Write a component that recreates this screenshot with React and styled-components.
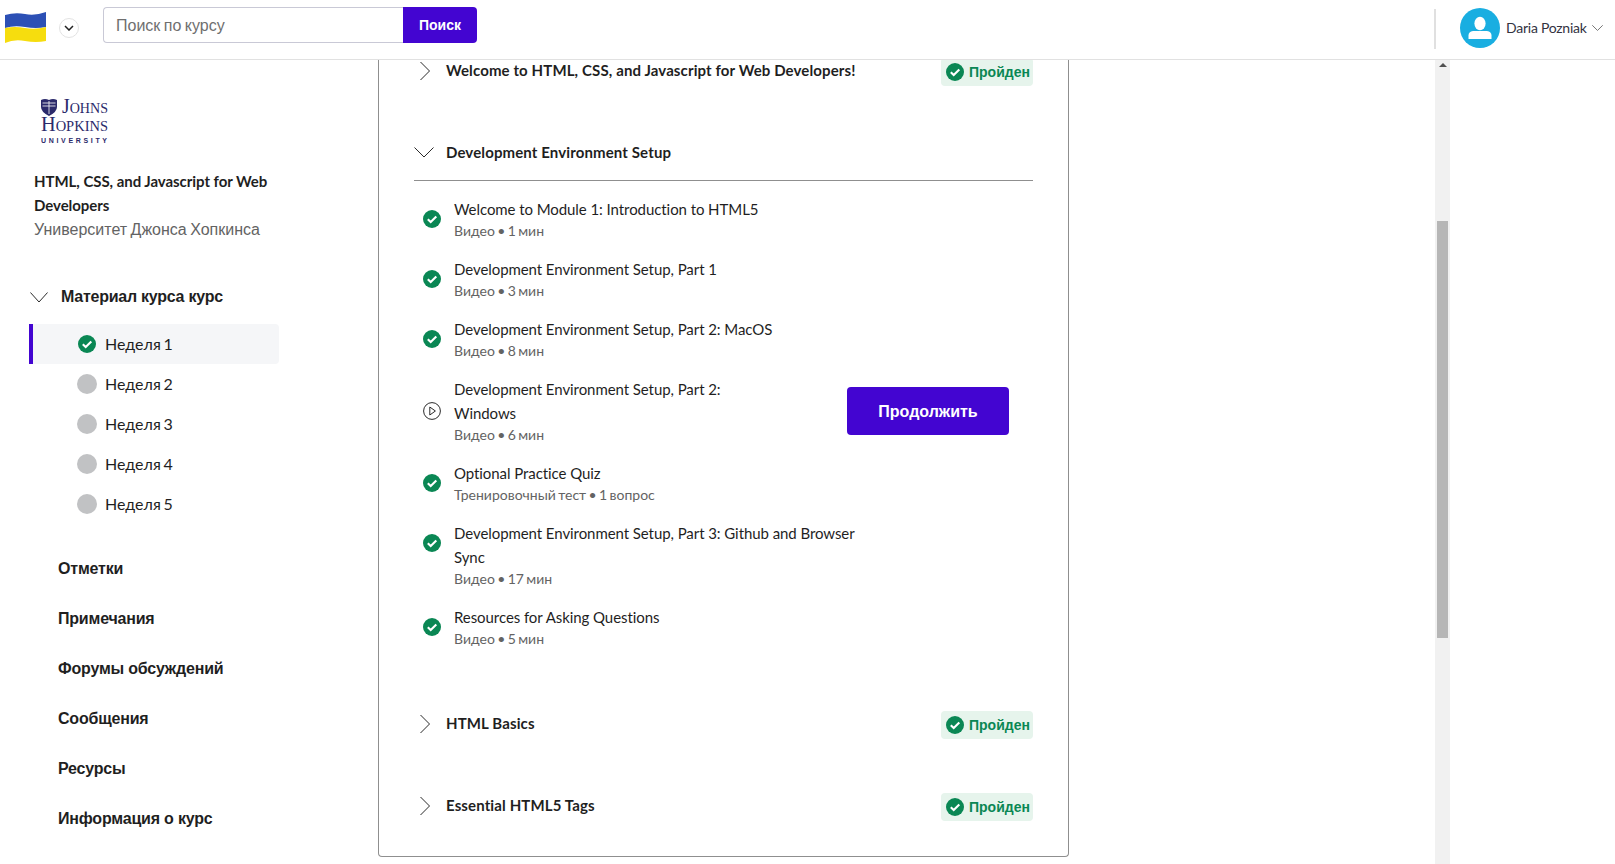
import React from 'react';
import styled, {createGlobalStyle} from 'styled-components';

const latin = `Lato, "Liberation Sans", sans-serif`;
const purple = '#4305d1';
const green = '#0a8754';

const lessons = [
   {title: 'Welcome to Module 1: Introduction to HTML5', meta: 'Видео • 1 мин', done: true},
   {title: 'Development Environment Setup, Part 1', meta: 'Видео • 3 мин', done: true},
   {title: 'Development Environment Setup, Part 2: MacOS', meta: 'Видео • 8 мин', done: true},
   {title: 'Development Environment Setup, Part 2: Windows', meta: 'Видео • 6 мин', done: false},
   {title: 'Optional Practice Quiz', meta: 'Тренировочный тест • 1 вопрос', done: true},
   {title: 'Development Environment Setup, Part 3: Github and Browser Sync', meta: 'Видео • 17 мин', done: true, iconTop: true},
   {title: 'Resources for Asking Questions', meta: 'Видео • 5 мин', done: true},
];

const weeks = ['Неделя 1', 'Неделя 2', 'Неделя 3', 'Неделя 4', 'Неделя 5'];
const links = ['Отметки', 'Примечания', 'Форумы обсуждений', 'Сообщения', 'Ресурсы', 'Информация о курс'];

const CheckIcon = ({size = 18}) => (
   <svg width={size} height={size} viewBox="0 0 18 18" style={{flex: 'none'}}>
      <circle cx="9" cy="9" r="9" fill={green} />
      <path d="M4.8 9.3l2.9 2.8 5.6-5.6" fill="none" stroke="#fff" strokeWidth="2.1" />
   </svg>
);

const PlayIcon = () => (
   <svg width="18" height="18" viewBox="0 0 18 18" style={{flex: 'none'}}>
      <circle cx="9" cy="9" r="8.4" fill="none" stroke="#2a2a2a" strokeWidth="1" />
      <path d="M6.8 5l5.6 4-5.6 4z" fill="none" stroke="#2a2a2a" strokeWidth="1" />
   </svg>
);

const ChevronRight = () => (
   <svg width="20" height="20" viewBox="0 0 20 20">
      <path d="M6.500 1l9 9-9 9" fill="none" stroke="#2a2a2a" strokeWidth="1" />
   </svg>
);

const ChevronDown = ({width = 20, height = 11, color = '#2a2a2a'}) => (
   <svg width={width} height={height} viewBox="0 0 20 11" preserveAspectRatio="none" style={{flex: 'none'}}>
      <path d="M.5.5l9.5 9.5 9.5-9.5" fill="none" stroke={color} strokeWidth="1" vectorEffect="non-scaling-stroke" />
   </svg>
);

const Passed = () => (
   <Badge>
      <CheckIcon />
      <span>Пройден</span>
   </Badge>
);

const SectionHead = ({title, open, passed}) => (
   <SectionRow $open={open}>
      <ChevronBox>{open ? <ChevronDown /> : <ChevronRight />}</ChevronBox>
      <SectionTitle>{title}</SectionTitle>
      {passed && <Passed />}
   </SectionRow>
);

const Logo = () => (
   <LogoSvg width="70" height="54" viewBox="0 -4 70 54">
      <path d="M0 2q4-2 8 0 4-2 8 0v7q0 5-8 9-8-4-8-9z" fill="#2b2a6b" />
      <path d="M1.500 5h13M1.500 8h13M8 3v13" stroke="#fff" strokeWidth=".8" />
      <LogoWord x="21" y="15" fontSize="21" textLength="46" lengthAdjust="spacingAndGlyphs">Johns</LogoWord>
      <LogoWord x="0" y="33" fontSize="21" textLength="67" lengthAdjust="spacingAndGlyphs">Hopkins</LogoWord>
      <LogoSmall x="0" y="45" fontSize="7" textLength="66">UNIVERSITY</LogoSmall>
   </LogoSvg>
);

const App = () => {
   return (
      <>
         <GlobalStyle />
         <Header>
            <Flag width="41" height="31" viewBox="0 0 41 31">
               <path d="M0 3q10-3 20-1t21-2v15q-10 2-21 0T0 16z" fill="#2c50b5" />
               <path d="M0 16q10-2 20 0t21-1v14q-10 2-21 0T0 31z" fill="#f6dd0e" />
            </Flag>
            <RoundButton>
               <svg width="10" height="6" viewBox="0 0 10 6">
                  <path d="M1 1l4 4 4-4" fill="none" stroke="#222" strokeWidth="1.5" />
               </svg>
            </RoundButton>
            <SearchBox>
               <SearchInput placeholder="Поиск по курсу" readOnly />
               <SearchButton>Поиск</SearchButton>
            </SearchBox>
            <HeaderDivider />
            <Avatar>
               <svg width="40" height="40" viewBox="0 0 40 40">
                  <ellipse cx="20" cy="15.5" rx="5.6" ry="6.8" fill="#fff" />
                  <path d="M8.5 31v-3.5q0-4 4.5-4.6h14q4.500.6 4.500 4.600V31z" fill="#fff" />
               </svg>
            </Avatar>
            <UserName>Daria Pozniak</UserName>
            <UserChevron><ChevronDown width={11} height={6} color="#777" /></UserChevron>
         </Header>

         <Body>
            <Sidebar>
               <Logo />
               <CourseTitle>HTML, CSS, and Javascript for Web Developers</CourseTitle>
               <University>Университет Джонса Хопкинса</University>

               <MaterialHead>
                  <ChevronDown width={18} />
                  <span>Материал курса курс</span>
               </MaterialHead>

               <WeekList>
                  {weeks.map((week, i) => (
                     <WeekRow key={week} $active={i === 0}>
                        {i === 0 ? <CheckIcon /> : <GreyDot />}
                        <span>{week}</span>
                     </WeekRow>
                  ))}
               </WeekList>

               <NavList>
                  {links.map(link => <NavLink key={link}>{link}</NavLink>)}
               </NavList>
            </Sidebar>

            <Main>
               <Card>
                  <SectionHead title="Welcome to HTML, CSS, and Javascript for Web Developers!" passed />
                  <SectionGap />
                  <SectionHead title="Development Environment Setup" open />
                  <LessonList>
                     {lessons.map(lesson => (
                        <LessonRow key={lesson.title}>
                           <LessonIcon $top={lesson.iconTop}>
                              {lesson.done ? <CheckIcon /> : <PlayIcon />}
                           </LessonIcon>
                           <LessonText $narrow={!lesson.done}>
                              <LessonTitle>{lesson.title}</LessonTitle>
                              <LessonMeta>{lesson.meta}</LessonMeta>
                           </LessonText>
                           {!lesson.done && <ContinueButton>Продолжить</ContinueButton>}
                        </LessonRow>
                     ))}
                  </LessonList>
                  <SectionHead title="HTML Basics" passed />
                  <SectionGap />
                  <SectionHead title="Essential HTML5 Tags" passed />
               </Card>
            </Main>

            <ScrollTrack>
               <ScrollArrow />
               <ScrollThumb />
            </ScrollTrack>
         </Body>
      </>
   );
}

const GlobalStyle = createGlobalStyle`
   html, body {
      margin: 0;
      height: 100%;
      overflow: hidden;
      background: #fff;
   }
   body {
      font-family: ${latin};
      color: #1f1f1f;
   }
`;

const Header = styled.header`
   position: relative;
   z-index: 2;
   height: 59px;
   padding: 0 12px 0 5px;
   display: flex;
   align-items: center;
   background: #fff;
   border-bottom: 1px solid #e1e1e1;
`;

const Flag = styled.svg`
   flex: none;
   margin-top: -4px;
`;

const RoundButton = styled.div`
   width: 20px;
   height: 20px;
   margin: -3px 0 0 13px;
   flex: none;
   display: flex;
   align-items: center;
   justify-content: center;
   border: 1px solid #e3e3e3;
   border-radius: 50%;
   box-sizing: border-box;
`;

const SearchBox = styled.div`
   display: flex;
   margin-left: 24px;
   margin-top: -9px;
   height: 36px;
`;

const SearchInput = styled.input`
   width: 300px;
   box-sizing: border-box;
   padding: 2px 12px 0;
   border: 1px solid #c9c9d6;
   border-right: none;
   border-radius: 4px 0 0 4px;
   outline: none;
   font: 16px "Liberation Sans", sans-serif;
   word-spacing: -1px;
   &::placeholder {
      color: #6f6f6f;
      opacity: 1;
   }
`;

const SearchButton = styled.div`
   width: 74px;
   display: flex;
   align-items: center;
   justify-content: center;
   background: ${purple};
   border-radius: 0 4px 4px 0;
   color: #fff;
   font: bold 14px "Liberation Sans", sans-serif;
`;

const HeaderDivider = styled.div`
   width: 2px;
   height: 40px;
   margin-left: auto;
   margin-top: -1px;
   background: #e0e0e0;
`;

const Avatar = styled.div`
   width: 40px;
   height: 40px;
   margin-left: 24px;
   margin-top: -3px;
   border-radius: 50%;
   background: #19aee1;
`;

const UserName = styled.span`
   width: 80px;
   margin: -5px 6px 0;
   font-size: 14px;
   letter-spacing: -0.25px;
   color: #33333f;
   white-space: nowrap;
`;

const UserChevron = styled.span`
   display: flex;
   margin-top: -3px;
`;

const Body = styled.div`
   display: flex;
   height: 804px;
`;

const Sidebar = styled.aside`
   width: 378px;
   flex: none;
   box-sizing: border-box;
   padding-top: 34px;
`;

const LogoSvg = styled.svg`
   display: block;
   margin-left: 41px;
`;

const LogoWord = styled.text`
   font-family: "Liberation Serif", serif;
   font-variant: small-caps;
   fill: #2b2a6b;
`;

const LogoSmall = styled.text`
   font-family: "Liberation Sans", sans-serif;
   font-weight: 700;
   fill: #2b2a6b;
`;

const CourseTitle = styled.div`
   margin: 21px 90px 0 34px;
   font-size: 15px;
   font-weight: 700;
   letter-spacing: -0.05px;
   line-height: 24px;
`;

const University = styled.div`
   margin: 1px 0 0 34px;
   font: 16px/24px "Liberation Sans", sans-serif;
   word-spacing: -1px;
   color: #636363;
`;

const MaterialHead = styled.div`
   margin: 43px 0 15px 30px;
   height: 24px;
   display: flex;
   align-items: center;
   gap: 13px;
   font: bold 16px "Liberation Sans", sans-serif;
   letter-spacing: -0.25px;
`;

const WeekList = styled.div`
   margin-left: 29px;
   width: 250px;
`;

const WeekRow = styled.div`
   height: 40px;
   box-sizing: border-box;
   padding: 0 0 2px 44px;
   display: flex;
   align-items: center;
   gap: 8px;
   font-size: 16px;
   word-spacing: -1.5px;
   background: ${props => props.$active ? '#f5f6f8' : 'transparent'};
   border-left: 4px solid ${props => props.$active ? purple : 'transparent'};
   border-radius: 0 4px 4px 0;
   > svg {
      margin: 2px 1px 0;
   }
`;

const GreyDot = styled.span`
   width: 20px;
   height: 20px;
   margin-top: 2px;
   border-radius: 50%;
   background: #c1c2c4;
`;

const NavList = styled.nav`
   margin: 20px 0 0 58px;
`;

const NavLink = styled.div`
   height: 50px;
   display: flex;
   align-items: center;
   font: bold 16px "Liberation Sans", sans-serif;
   letter-spacing: -0.2px;
`;

const Main = styled.main`
   width: 1057px;
   flex: none;
   overflow: hidden;
`;

const Card = styled.section`
   width: 691px;
   height: 799px;
   box-sizing: border-box;
   padding: 0 35px;
   border: 1px solid #8f8f8f;
   border-top: none;
   border-radius: 0 0 4px 4px;
`;

const SectionRow = styled.div`
   height: 28px;
   padding-bottom: ${props => props.$open ? '12px' : '0'};
   display: flex;
   align-items: center;
   gap: 12px;
   &:first-child {
      margin-top: -2px;
   }
`;

const ChevronBox = styled.span`
   width: 20px;
   height: 20px;
   margin-top: -3px;
   flex: none;
   display: flex;
   align-items: center;
   justify-content: center;
`;

const SectionTitle = styled.span`
   margin-top: -4px;
   font-size: 15px;
   font-weight: 700;
   letter-spacing: 0.12px;
`;

const Badge = styled.span`
   margin-left: auto;
   width: 92px;
   height: 28px;
   box-sizing: border-box;
   padding-left: 5px;
   display: flex;
   align-items: center;
   gap: 5px;
   background: #e6f4ec;
   border-radius: 4px;
   color: ${green};
   font: bold 14px "Liberation Sans", sans-serif;
`;

const SectionGap = styled.div`
   height: 54px;
`;

const LessonList = styled.div`
   border-top: 1px solid #8f8f8f;
   padding: 16px 0 62px 9px;
   display: flex;
   flex-direction: column;
   gap: 16px;
`;

const LessonRow = styled.div`
   display: flex;
   align-items: center;
   gap: 13px;
`;

const LessonIcon = styled.span`
   display: flex;
   align-self: ${props => props.$top ? 'flex-start' : 'center'};
   margin-top: ${props => props.$top ? '13px' : '0'};
`;

const LessonText = styled.div`
   width: ${props => props.$narrow ? '300px' : '420px'};
`;

const LessonTitle = styled.div`
   font-size: 15px;
   letter-spacing: -0.07px;
   line-height: 24px;
`;

const LessonMeta = styled.div`
   font-size: 14px;
   word-spacing: -1.2px;
   line-height: 20px;
   color: #636363;
`;

const ContinueButton = styled.div`
   width: 162px;
   height: 48px;
   margin-left: auto;
   margin-right: 24px;
   padding-top: 1px;
   box-sizing: border-box;
   display: flex;
   align-items: center;
   justify-content: center;
   background: ${purple};
   border-radius: 4px;
   color: #fff;
   font: bold 16px "Liberation Sans", sans-serif;
`;

const ScrollTrack = styled.div`
   width: 15px;
   flex: none;
   background: #f1f1f1;
`;

const ScrollArrow = styled.div`
   width: 0;
   height: 0;
   margin: 3px auto 0;
   border-left: 4px solid transparent;
   border-right: 4px solid transparent;
   border-bottom: 4px solid #505050;
`;

const ScrollThumb = styled.div`
   height: 417px;
   margin: 154px 2px 0;
   background: #b6b6b6;
`;

export default App;
